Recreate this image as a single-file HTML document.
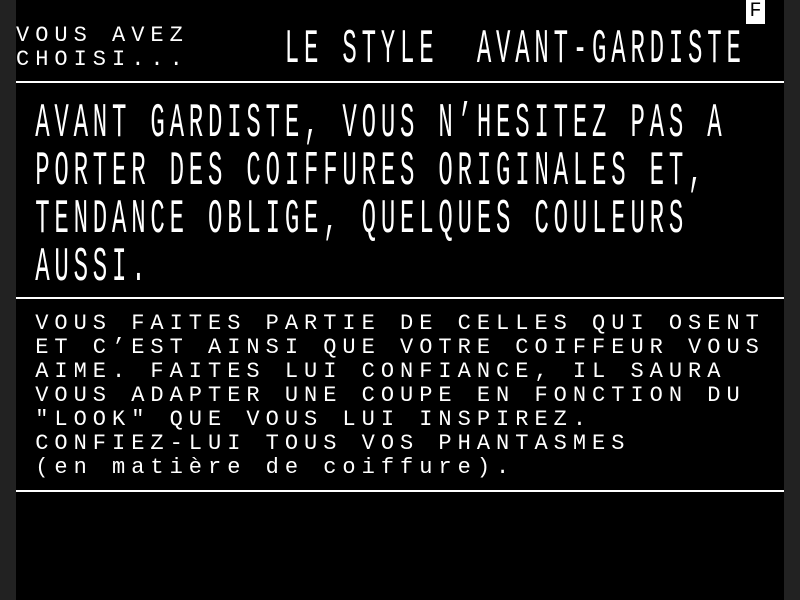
<!DOCTYPE html>
<html><head><meta charset="utf-8"><style>
html,body{margin:0;padding:0;width:800px;height:600px;overflow:hidden;background:#222;}
#scr{position:absolute;left:16px;top:0;width:768px;height:600px;background:#000;}
.t{position:absolute;white-space:pre;color:#fff;font-family:"Liberation Mono",monospace;font-size:22px;line-height:24px;letter-spacing:6px;}
.b{position:absolute;white-space:pre;color:#fff;font-family:"Liberation Mono",monospace;font-size:24px;line-height:24px;letter-spacing:4.8px;transform:scaleY(2);transform-origin:0 0;}
.hr{position:absolute;left:0;width:768px;height:2px;background:#fff;}
#f{position:absolute;left:730px;top:0;width:19px;height:24px;background:#fff;color:#000;font-family:"Liberation Mono",monospace;font-size:20px;line-height:24px;text-align:center;}
</style></head><body>
<div id="scr">
<div id="f">F</div>
<div class="t" style="left:0;top:24px">VOUS AVEZ</div>
<div class="t" style="left:0;top:48px">CHOISI...</div>
<div class="b" style="left:268.8px;top:28px">LE STYLE  AVANT-GARDISTE</div>
<div class="hr" style="top:81px"></div>
<div class="b" style="left:19.2px;top:102px">AVANT GARDISTE, VOUS N’HESITEZ PAS A</div>
<div class="b" style="left:19.2px;top:150px">PORTER DES COIFFURES ORIGINALES ET,</div>
<div class="b" style="left:19.2px;top:198px">TENDANCE OBLIGE, QUELQUES COULEURS</div>
<div class="b" style="left:19.2px;top:246px">AUSSI.</div>
<div class="hr" style="top:297px"></div>
<div class="t" style="left:19.2px;top:312px">VOUS FAITES PARTIE DE CELLES QUI OSENT
ET C’EST AINSI QUE VOTRE COIFFEUR VOUS
AIME. FAITES LUI CONFIANCE, IL SAURA
VOUS ADAPTER UNE COUPE EN FONCTION DU
"LOOK" QUE VOUS LUI INSPIREZ.
CONFIEZ-LUI TOUS VOS PHANTASMES
(en matière de coiffure).</div>
<div class="hr" style="top:490px"></div>
</div>
</body></html>
